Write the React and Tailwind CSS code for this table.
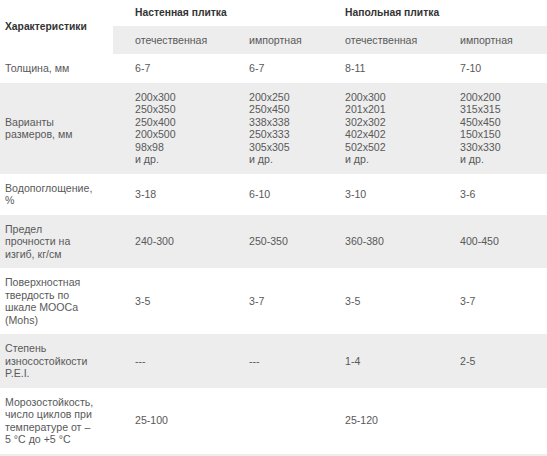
import React from 'react';

// ---------------- Data ----------------
const rows = [
  {
    label: ['Толщина, мм'],
    cells: [['6-7'], ['6-7'], ['8-11'], ['7-10']],
  },
  {
    label: ['Варианты', 'размеров, мм'],
    cells: [
      ['200x300', '250x350', '250x400', '200x500', '98x98', 'и др.'],
      ['200x250', '250x450', '338x338', '250x333', '305x305', 'и др.'],
      ['200x300', '201x201', '302x302', '402x402', '502x502', 'и др.'],
      ['200x200', '315x315', '450x450', '150x150', '330x330', 'и др.'],
    ],
  },
  {
    label: ['Водопоглощение,', '%'],
    cells: [['3-18'], ['6-10'], ['3-10'], ['3-6']],
  },
  {
    label: ['Предел', 'прочности на', 'изгиб, кг/см'],
    cells: [['240-300'], ['250-350'], ['360-380'], ['400-450']],
  },
  {
    label: ['Поверхностная', 'твердость по', 'шкале МООСа', '(Mohs)'],
    cells: [['3-5'], ['3-7'], ['3-5'], ['3-7']],
  },
  {
    label: ['Степень', 'износостойкости', 'P.E.I.'],
    cells: [['---'], ['---'], ['1-4'], ['2-5']],
  },
  {
    label: ['Морозостойкость,', 'число циклов при', 'температуре от –', '5 °C до +5 °C'],
    cells: [['25-100'], [], ['25-120'], []],
  },
];

const widths = ['w-[114px]', 'w-[96px]', 'w-[115px]', 'flex-1'];

function Lines({ lines }) {
  return lines.map((l, i) => (
    <div key={i} className="whitespace-nowrap">
      {l}
    </div>
  ));
}

function Row({ row, gray }) {
  return (
    <div className={`flex items-center py-[8px] ${gray ? 'bg-[#ededed]' : 'bg-white'}`}>
      <div className="w-[113px] pl-[5px]">
        <Lines lines={row.label} />
      </div>
      {row.cells.map((c, i) => (
        <div key={i} className={`${widths[i]} pl-[22px]`}>
          <Lines lines={c} />
        </div>
      ))}
    </div>
  );
}

// ---------------- App ----------------
export default function App() {
  return (
    <div
      className="w-[547px] h-[456px] overflow-hidden bg-white text-[10.6px] leading-[12.5px] text-[#595959]"
      style={{ fontFamily: '"Liberation Sans", Arial, sans-serif' }}
    >
      <div className="flex">
        <div className="w-[113px] pl-[5px] pt-[21px] text-[10.3px] font-bold text-[#333]">Характеристики</div>
        <div className="flex-1">
          <div className="flex h-[26px] items-center text-[10.3px] font-bold text-[#333]">
            <div className="w-[210px] pl-[22px]">Настенная плитка</div>
            <div className="flex-1 pl-[22px]">Напольная плитка</div>
          </div>
          <div className="flex h-[28px] items-center bg-[#ededed]">
            <div className="w-[114px] pl-[22px]">отечественная</div>
            <div className="w-[96px] pl-[22px]">импортная</div>
            <div className="w-[115px] pl-[22px]">отечественная</div>
            <div className="flex-1 pl-[22px]">импортная</div>
          </div>
        </div>
      </div>
      {rows.map((r, i) => (
        <Row key={i} row={r} gray={i % 2 === 1} />
      ))}
      <div className="h-[20px] bg-[#ededed]" />
    </div>
  );
}
